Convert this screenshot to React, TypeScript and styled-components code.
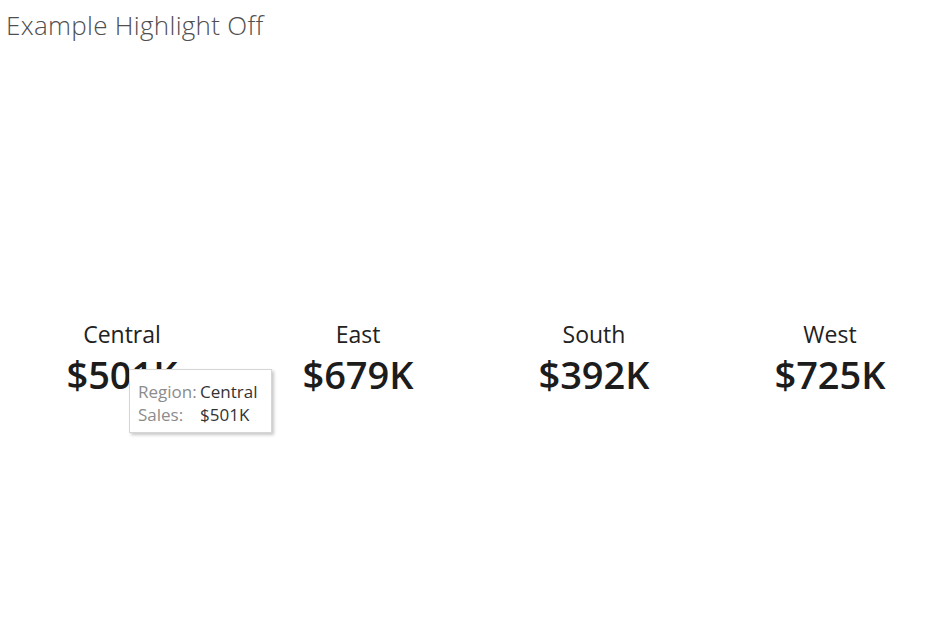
import React from 'react';
import styled, { createGlobalStyle } from 'styled-components';

const GlobalStyle = createGlobalStyle`
  html, body {
    margin: 0;
    padding: 0;
    background: #ffffff;
  }
  body {
    font-family: "Open Sans", "Noto Sans", Arial, sans-serif;
  }
`;

const Page = styled.div`
  position: relative;
  width: 938px;
  height: 642px;
  overflow: hidden;
  background: #ffffff;
`;

const Title = styled.h1`
  margin: 0;
  padding: 8px 6px 0;
  height: 34px;
  font-size: 26px;
  line-height: 34px;
  font-weight: 300;
  color: #4f4f4f;
  letter-spacing: 0.3px;
`;

const Row = styled.div`
  display: grid;
  grid-template-columns: repeat(4, 236px);
  padding-left: 4px;
  margin-top: 278px;
`;

const Card = styled.div`
  display: flex;
  flex-direction: column;
  align-items: center;
  gap: 4px;
`;

const RegionLabel = styled.div`
  font-size: 23px;
  line-height: 28px;
  font-weight: 400;
  color: #222222;
`;

const Value = styled.div`
  font-size: 38px;
  line-height: 44px;
  font-weight: 600;
  color: #1c1c1c;
`;

// hover tooltip, sits over the first card
const Tooltip = styled.div<{ $x: number; $y: number }>`
  position: absolute;
  left: ${(p) => p.$x}px;
  top: ${(p) => p.$y}px;
  width: 133px;
  padding: 10px 0 6px 8px;
  background: #ffffff;
  border: 1px solid #d6d6d6;
  box-shadow: 2px 2px 3px rgba(0, 0, 0, 0.22);
  display: grid;
  grid-template-columns: 62px 1fr;
  font-size: 17px;
  line-height: 23px;
`;

const TipKey = styled.span`
  color: #8c8c8c;
  white-space: nowrap;
`;

const TipValue = styled.span`
  color: #333333;
  white-space: nowrap;
`;

const regions = [
  { name: 'Central', sales: '$501K' },
  { name: 'East', sales: '$679K' },
  { name: 'South', sales: '$392K' },
  { name: 'West', sales: '$725K' },
];

export default function App() {
  return (
    <>
      <GlobalStyle />
      <Page>
        <Title>Example Highlight Off</Title>
        <Row>
          {regions.map((r) => (
            <Card key={r.name}>
              <RegionLabel>{r.name}</RegionLabel>
              <Value>{r.sales}</Value>
            </Card>
          ))}
        </Row>
        <Tooltip $x={129} $y={369}>
          <TipKey>Region:</TipKey>
          <TipValue>Central</TipValue>
          <TipKey>Sales:</TipKey>
          <TipValue>$501K</TipValue>
        </Tooltip>
      </Page>
    </>
  );
}
